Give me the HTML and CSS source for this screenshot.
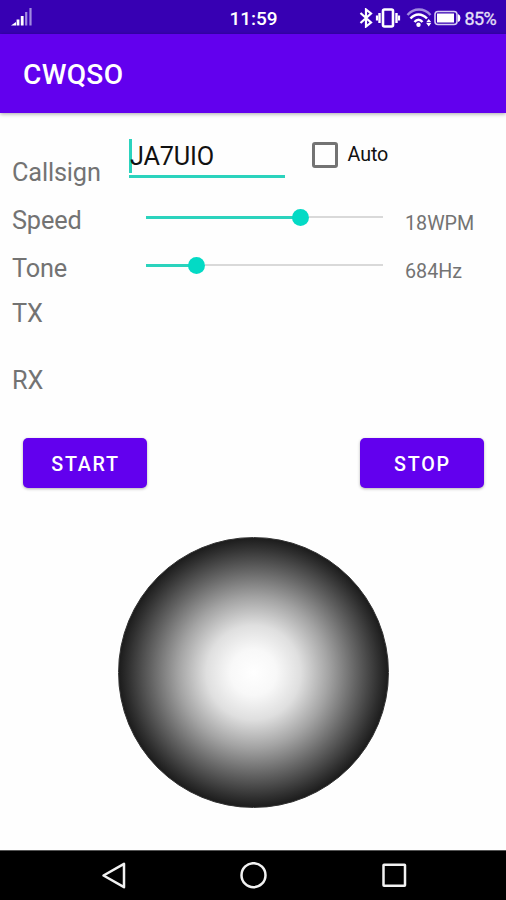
FILE: index.html
```
<!DOCTYPE html>
<html lang="en">

<head>
    <meta charset="UTF-8">
    <meta name="viewport" content="width=device-width, initial-scale=1.0">
    <title>CWQSO</title>
    <link rel="stylesheet" href="styles.css">
</head>

<body>
    <!-- status bar -->
    <div class="status-bar">
        <svg class="signal" width="22" height="20" viewBox="0 0 22 20">
            <path d="M0 18.500L5 15V18.500Z" fill="#fff" />
            <path d="M7 18.500V12.500M11.200 18.500V9" stroke="#fff" stroke-width="2.800" />
            <path d="M15.200 18.500V5M19.500 18.500V1" stroke="#a18be0" stroke-width="2.200" />
        </svg>
        <span class="clock">11:59</span>
        <div class="status-icons">
            <svg class="bluetooth" width="14" height="20" viewBox="0 0 14 20">
                <path d="M1.500 5L12 14.500L7 18.500V1.500L12 5.500L1.500 15" fill="none" stroke="#fff" stroke-width="2.200" />
            </svg>
            <svg class="vibrate" width="26" height="20" viewBox="0 0 26 20">
                <rect x="8" y="1.500" width="10" height="17" rx="1.500" fill="none" stroke="#fff" stroke-width="2.600" />
                <path d="M4.500 5V15M21.500 5V15" stroke="#fff" stroke-width="2.400" />
                <path d="M2 7.500V12.500M24 7.500V12.500" stroke="#fff" stroke-width="2.200" />
            </svg>
            <svg class="wifi" width="26" height="20" viewBox="0 0 26 20">
                <path d="M1.500 7C8 -.3 18 -.3 24.500 7" fill="none" stroke="#a18be0" stroke-width="2.400" />
                <path d="M4.500 10.500C9 5 16 5 21 10.500M8.500 14C11 11 14 11 16.500 14" fill="none" stroke="#fff" stroke-width="2.500" />
                <circle cx="12.500" cy="16.700" r="2.200" fill="#fff" />
                <path d="M20.200 14.200L22.700 11L25.300 14.200ZM20.200 15L22.700 18.500L25.300 15Z" fill="#fff" />
            </svg>
            <svg class="battery" width="27" height="16" viewBox="0 0 27 16">
                <rect x="1" y="1.500" width="22" height="13" rx="3" fill="none" stroke="#d5ccf2" stroke-width="1.600" />
                <rect x="3" y="3.500" width="17" height="9" fill="#fff" />
                <path d="M24 4Q26.500 5 26.500 8T24 12Z" fill="#fff" />
            </svg>
            <span class="percent">85%</span>
        </div>
    </div>

    <!-- app bar -->
    <header class="app-bar">
        <h1>CWQSO</h1>
    </header>

    <main class="content">
        <div class="row callsign-row">
            <span class="label">Callsign</span>
            <div class="callsign-input"><span class="cursor"></span>JA7UIO</div>
            <div class="auto">
                <span class="checkbox"></span>
                <span>Auto</span>
            </div>
        </div>
        <div class="row">
            <span class="label">Speed</span>
            <div class="slider">
                <span class="track" style="width: 65%"></span>
                <span class="thumb"></span>
                <span class="rest"></span>
            </div>
            <span class="value">18WPM</span>
        </div>
        <div class="row">
            <span class="label">Tone</span>
            <div class="slider">
                <span class="track" style="width: 21%"></span>
                <span class="thumb"></span>
                <span class="rest"></span>
            </div>
            <span class="value">684Hz</span>
        </div>
        <div class="message tx">TX</div>
        <div class="message rx">RX</div>

        <div class="buttons">
            <button>START</button>
            <button>STOP</button>
        </div>

        <!-- morse key -->
        <div class="key"></div>
    </main>

    <!-- navigation bar -->
    <nav class="nav-bar">
        <svg width="28" height="28" viewBox="0 0 28 28">
            <path d="M4.500 13.500L25 1.800V25.200Z" />
        </svg>
        <svg width="28" height="28" viewBox="0 0 28 28">
            <circle cx="13.500" cy="13.200" r="12" />
        </svg>
        <svg width="28" height="28" viewBox="0 0 28 28">
            <rect x="3.500" y="2.800" width="21.500" height="21" rx="0.500" />
        </svg>
    </nav>
</body>

</html>
```
FILE: styles.css
```
* {
    box-sizing: border-box;
}

body {
    margin: 0;
    height: 900px;
    display: flex;
    flex-direction: column;
    font-family: Roboto, sans-serif;
    background: #fefefe;
    overflow: hidden;
}

/* status bar */
.status-bar {
    height: 34px;
    display: grid;
    grid-template-columns: 1fr auto 1fr;
    align-items: center;
    padding: 2px 10px 0 11px;
    background: #3700b3;
    color: #fff;
}

.signal {
    margin-bottom: 2px;
}

.clock {
    font-size: 19px;
    font-weight: 500;
}

.status-icons {
    display: flex;
    align-items: center;
    justify-content: flex-end;
}

.vibrate {
    margin: 0 5px 0 2px;
}

.battery {
    margin: 0 3px 0 2px;
}

.percent {
    font-size: 18px;
    color: #e6e0f7;
    letter-spacing: -0.6px;
    -webkit-text-stroke: 0.3px #e6e0f7;
}

/* app bar */
.app-bar {
    height: 79px;
    display: flex;
    align-items: center;
    padding-left: 23px;
    background: #6200ee;
    color: #fff;
    box-shadow: 0 1px 4px rgba(0, 0, 0, 0.35);
}

.app-bar h1 {
    margin: 0;
    padding-top: 2px;
    font-size: 28.1px;
    font-weight: 500;
    letter-spacing: 0.3px;
}

/* settings */
.content {
    flex: 1;
    padding-top: 24px;
}

.row {
    height: 48px;
    display: grid;
    grid-template-columns: 134px 259px 1fr;
    align-items: center;
    padding-left: 12px;
}

.label,
.message {
    font-size: 25.3px;
    letter-spacing: -0.15px;
    color: #737373;
}

.callsign-row {
    height: 59px;
    grid-template-columns: 117px 156px 1fr;
    align-items: start;
}

.callsign-row .label {
    padding-top: 21px;
}

.callsign-input {
    height: 41px;
    display: flex;
    align-items: center;
    padding-left: 1px;
    border-bottom: 3px solid #2bd3bd;
    font-size: 25.3px;
    letter-spacing: -0.2px;
    color: #111;
}

.cursor {
    width: 3px;
    height: 34px;
    margin: 0 -2px 0 -1px;
    background: #2bd3bd;
}

.auto {
    height: 35px;
    display: flex;
    align-items: center;
    gap: 9.5px;
    margin-left: 27px;
    font-size: 19.7px;
    letter-spacing: -0.1px;
    color: #111;
}

.checkbox {
    width: 26px;
    height: 26px;
    border: 3px solid #737373;
    border-radius: 3px;
}

/* sliders */
.slider {
    width: 237px;
    height: 17px;
    display: flex;
    align-items: center;
    margin-top: -6px;
}

.track {
    height: 3px;
    margin-right: -8px;
    background: #2bd3bd;
}

.thumb {
    width: 17px;
    height: 17px;
    border-radius: 50%;
    background: #03dac5;
}

.rest {
    flex: 1;
    height: 2px;
    background: #d9d9d9;
}

.value {
    padding-top: 6px;
    font-size: 19.7px;
    color: #737373;
}

.message {
    height: 34px;
    line-height: 34px;
    padding-left: 12px;
}

.tx {
    margin-top: 5px;
}

.rx {
    margin-top: 33px;
}

/* buttons */
.buttons {
    display: flex;
    justify-content: space-between;
    margin-top: 40px;
    padding: 0 22px 0 23px;
}

.buttons button {
    width: 124px;
    height: 50px;
    padding: 3px 0 0 1px;
    border: none;
    border-radius: 5px;
    background: #6200ee;
    color: #fff;
    font-family: inherit;
    font-size: 19.7px;
    font-weight: 500;
    letter-spacing: 1.76px;
    box-shadow: 0 1px 3px rgba(0, 0, 0, 0.3);
}

.key {
    width: 271px;
    height: 271px;
    margin: 49px 0 0 118px;
    border: 1px solid #333;
    border-radius: 50%;
    background: radial-gradient(circle closest-side, #fff 0%, #f8f8f8 17%, #dfdfdf 35%, #a3a3a3 56%, #646464 76%, #303030 93%, #1c1c1c 100%);
}

/* navigation bar */
.nav-bar {
    height: 50px;
    display: flex;
    justify-content: space-between;
    align-items: center;
    padding: 0 98px 0 99px;
    border-top: 1px solid #555;
    background: #000;
}

.nav-bar svg {
    fill: none;
    stroke: #f2f2f2;
    stroke-width: 2.5;
    stroke-linejoin: round;
}
```
